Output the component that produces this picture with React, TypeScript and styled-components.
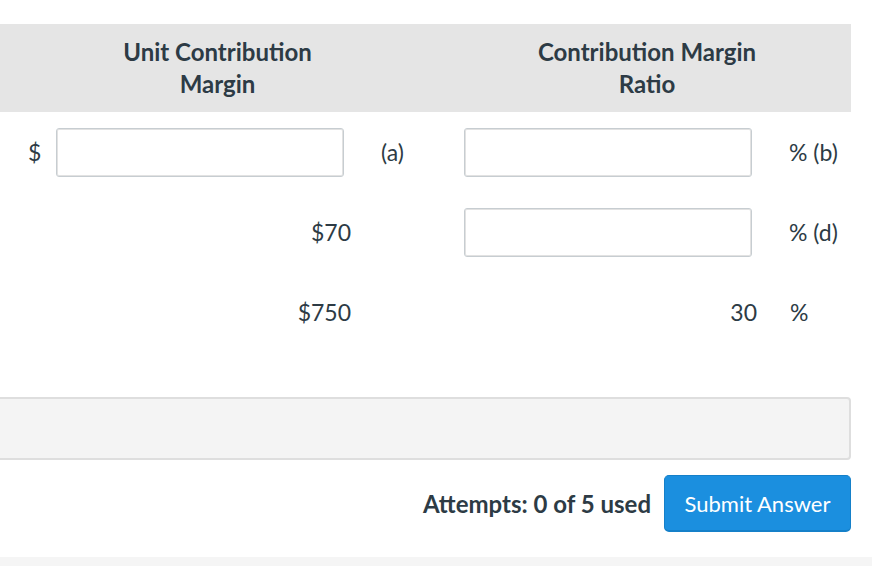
import styled, { createGlobalStyle } from "styled-components";

const GlobalStyle = createGlobalStyle`
  html, body {
    margin: 0;
    padding: 0;
    background: #ffffff;
  }
  body {
    font-family: Lato, "Open Sans", sans-serif;
    color: #2d3b45;
  }
`;

const Page = styled.div`
  width: 872px;
  height: 566px;
  display: flex;
  flex-direction: column;
  padding-top: 24px;
  box-sizing: border-box;
  overflow: hidden;
  & > * {
    flex: none;
  }
`;

const Table = styled.div`
  width: 851px;
  display: grid;
  grid-template-columns: 435px 416px;
`;

const HeadCell = styled.div<{ $shift?: number }>`
  background: #e5e5e5;
  height: 88px;
  display: flex;
  align-items: center;
  justify-content: center;
  text-align: center;
  font-weight: 700;
  font-size: 24px;
  line-height: 32px;
  padding-left: ${(p) => p.$shift ?? 0}px;
`;

const Cell = styled.div<{ $pad: number }>`
  height: 80px;
  display: flex;
  align-items: center;
  padding-left: ${(p) => p.$pad}px;
  font-size: 23px;
`;

const Prefix = styled.span`
  width: 28px;
  flex: none;
`;

const Field = styled.input`
  width: 288px;
  height: 49px;
  box-sizing: border-box;
  border: 1px solid #c7cdd1;
  border-radius: 3px;
  box-shadow: inset 0 0 0 1px #e2e2e2;
  background: #fff;
  font-family: inherit;
  font-size: 20px;
  padding: 0 10px;
  flex: none;
`;

const Value = styled.span<{ $width: number }>`
  width: ${(p) => p.$width}px;
  text-align: right;
  flex: none;
`;

const Suffix = styled.span<{ $gap: number }>`
  margin-left: ${(p) => p.$gap}px;
`;

const Note = styled.div`
  width: 851px;
  height: 63px;
  margin-top: 45px;
  box-sizing: border-box;
  background: #f4f4f4;
  border: 2px solid #dedede;
  border-left: none;
  border-radius: 0 4px 4px 0;
`;

const Footer = styled.div`
  width: 851px;
  margin-top: 15px;
  display: flex;
  justify-content: flex-end;
  align-items: center;
  gap: 13px;
`;

const Attempts = styled.span`
  font-weight: 700;
  font-size: 24px;
`;

const SubmitButton = styled.button`
  width: 187px;
  height: 57px;
  background: #1b8fdf;
  color: #ffffff;
  border: 1px solid #1580c9;
  border-bottom-width: 2px;
  border-radius: 5px;
  font-family: inherit;
  font-size: 22px;
  cursor: pointer;
`;

const BottomStrip = styled.div`
  margin-top: 25px;
  height: 12px;
  background: #f5f5f5;
`;

export default function App() {
  return (
    <Page>
      <GlobalStyle />
      <Table>
        <HeadCell>
          Unit Contribution
          <br />
          Margin
        </HeadCell>
        <HeadCell $shift={8}>
          Contribution Margin
          <br />
          Ratio
        </HeadCell>

        <Cell $pad={28}>
          <Prefix>$</Prefix>
          <Field type="text" />
          <Suffix $gap={37}>(a)</Suffix>
        </Cell>
        <Cell $pad={29}>
          <Field type="text" />
          <Suffix $gap={37}>% (b)</Suffix>
        </Cell>

        <Cell $pad={28}>
          <Prefix />
          <Value $width={295}>$70</Value>
        </Cell>
        <Cell $pad={29}>
          <Field type="text" />
          <Suffix $gap={37}>% (d)</Suffix>
        </Cell>

        <Cell $pad={28}>
          <Prefix />
          <Value $width={295}>$750</Value>
        </Cell>
        <Cell $pad={29}>
          <Value $width={293}>30</Value>
          <Suffix $gap={33}>%</Suffix>
        </Cell>
      </Table>
      <Note />
      <Footer>
        <Attempts>Attempts: 0 of 5 used</Attempts>
        <SubmitButton>Submit Answer</SubmitButton>
      </Footer>
      <BottomStrip />
    </Page>
  );
}
